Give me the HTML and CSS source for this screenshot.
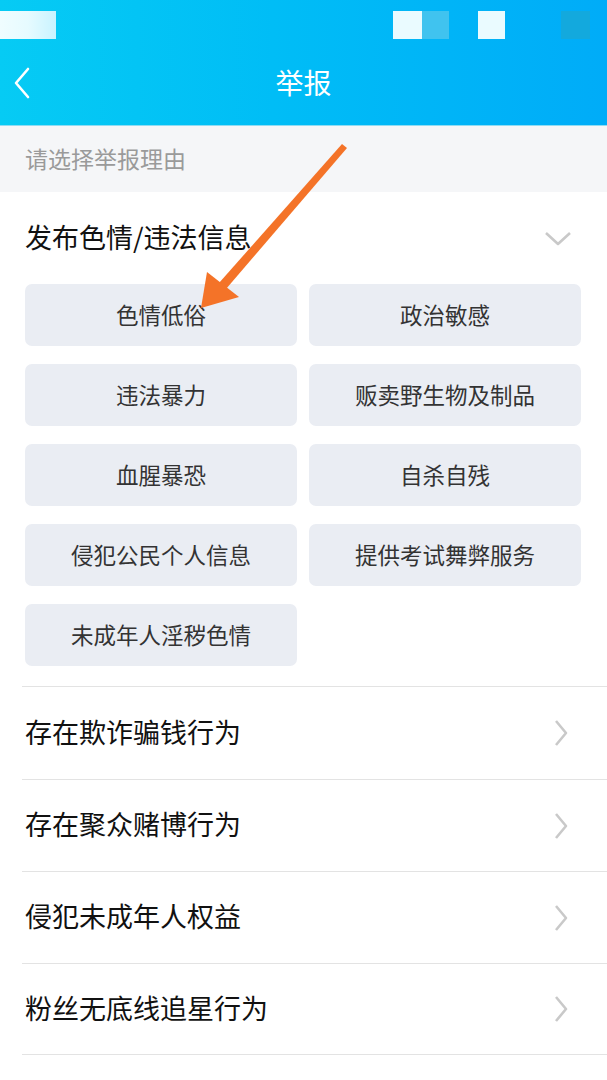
FILE: index.html
```html
<!DOCTYPE html>
<html lang="zh-CN">
<head>
<meta charset="utf-8">
<title>举报</title>
<link rel="stylesheet" href="styles.css">
</head>
<body>
<div class="page">
  <header class="top">
    <div class="status">
      <div class="blk blk-a"></div>
      <div class="blk blk-w g1"></div>
      <div class="blk blk-l"></div>
      <div class="blk blk-w g2"></div>
      <div class="blk blk-d g3"></div>
    </div>
    <div class="nav">
      <svg class="back" width="20" height="34" viewBox="0 0 20 34"><polyline points="14,3 2,17 14,31" fill="none" stroke="#ffffff" stroke-width="2.6" stroke-linecap="round" stroke-linejoin="round"/></svg>
      <div class="title">举报</div>
    </div>
  </header>

  <div class="hint">请选择举报理由</div>

  <section class="group">
    <div class="group-head">
      <span>发布色情/违法信息</span>
      <svg class="chev-down" width="30" height="16" viewBox="0 0 30 16"><polyline points="2,2 14,13 26,2" fill="none" stroke="#c9c9c9" stroke-width="2.6" stroke-linejoin="round"/></svg>
    </div>
    <div class="grid">
      <div class="opt">色情低俗</div>
      <div class="opt">政治敏感</div>
      <div class="opt">违法暴力</div>
      <div class="opt">贩卖野生物及制品</div>
      <div class="opt">血腥暴恐</div>
      <div class="opt">自杀自残</div>
      <div class="opt">侵犯公民个人信息</div>
      <div class="opt">提供考试舞弊服务</div>
      <div class="opt">未成年人淫秽色情</div>
    </div>
  </section>

  <ul class="list">
    <li class="row"><span>存在欺诈骗钱行为</span><svg class="chev" width="16" height="28" viewBox="0 0 16 28"><polyline points="3,2 13,14 3,26" fill="none" stroke="#c9c9c9" stroke-width="2.6" stroke-linejoin="round"/></svg></li>
    <li class="row"><span>存在聚众赌博行为</span><svg class="chev" width="16" height="28" viewBox="0 0 16 28"><polyline points="3,2 13,14 3,26" fill="none" stroke="#c9c9c9" stroke-width="2.6" stroke-linejoin="round"/></svg></li>
    <li class="row"><span>侵犯未成年人权益</span><svg class="chev" width="16" height="28" viewBox="0 0 16 28"><polyline points="3,2 13,14 3,26" fill="none" stroke="#c9c9c9" stroke-width="2.6" stroke-linejoin="round"/></svg></li>
    <li class="row"><span>粉丝无底线追星行为</span><svg class="chev" width="16" height="28" viewBox="0 0 16 28"><polyline points="3,2 13,14 3,26" fill="none" stroke="#c9c9c9" stroke-width="2.6" stroke-linejoin="round"/></svg></li>
  </ul>

  <svg class="arrow" width="607" height="1080" viewBox="0 0 607 1080">
    <polygon points="342,144 347,148 226,289 219,283" fill="#f47328"/>
    <polygon points="201,308 207,272 239,297" fill="#f47328"/>
  </svg>
</div>
</body>
</html>
```

FILE: styles.css
```css
* { box-sizing: border-box; }
html, body { margin: 0; padding: 0; }
body {
  font-family: "Noto Sans CJK SC", "Noto Sans", sans-serif;
  background: #ffffff;
  width: 607px;
  height: 1080px;
  overflow: hidden;
}
.page { position: relative; width: 607px; height: 1080px; }

.top {
  height: 126px;
  background: linear-gradient(90deg, #06cbf4 0%, #00bdf6 45%, #00acf8 100%);
  border-bottom: 1px solid #8fdcf3;
}
.status {
  height: 50px;
  display: flex;
  align-items: flex-start;
  padding-top: 11px;
}
.blk { height: 28px; }
.blk-a { width: 56px; background: linear-gradient(90deg, #f0fdff 0%, #e6fbff 50%, #c9f3ff 100%); }
.blk-w { width: 29px; background: #eafbff; }
.blk-l { width: 27px; background: #40c3ef; }
.blk-d { width: 29px; background: #13a9dd; }
.g1 { margin-left: 337px; }
.g2 { margin-left: 29px; width: 27px; }
.g3 { margin-left: 56px; }

.nav {
  height: 66px;
  display: flex;
  align-items: center;
  justify-content: center;
  position: relative;
  padding-bottom: 2px;
}
.back { position: absolute; left: 14px; top: 16px; }
.title {
  color: #ffffff;
  font-size: 28px;
}

.hint {
  height: 66px;
  background: #f5f6f8;
  color: #9a9a9a;
  font-size: 23px;
  padding-left: 25px;
  padding-bottom: 3px;
  display: flex;
  align-items: center;
}

.group-head {
  height: 92px;
  display: flex;
  align-items: center;
  justify-content: space-between;
  padding: 0 33px 3px 25px;
  font-size: 27px;
  color: #111111;
}
.chev-down { margin-top: 4px; }

.grid {
  display: grid;
  grid-template-columns: 272px 272px;
  column-gap: 12px;
  row-gap: 18px;
  padding: 0 26px 20px 25px;
}
.opt {
  height: 62px;
  background: #eaedf3;
  border-radius: 7px;
  display: flex;
  align-items: center;
  justify-content: center;
  font-size: 22.5px;
  color: #333333;
  padding-bottom: 2px;
}

.list { list-style: none; margin: 0; padding: 0; }
.row {
  margin-left: 22px;
  height: 92px;
  border-top: 1.5px solid #e3e3e3;
  display: flex;
  align-items: center;
  justify-content: space-between;
  padding: 0 38px 4px 3px;
  font-size: 27px;
  color: #111111;
}
.row .chev { margin-top: 4px; }
.row:first-child { height: 93px; }
.row:last-child { border-bottom: 1.5px solid #e3e3e3; }

.arrow { position: absolute; left: 0; top: 0; pointer-events: none; }
```
